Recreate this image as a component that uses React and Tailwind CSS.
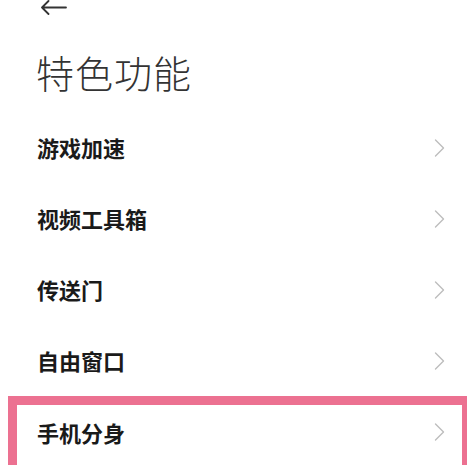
const items = ['游戏加速', '视频工具箱', '传送门', '自由窗口']

function Chevron() {
  return (
    <svg width="11" height="18" viewBox="0 0 11 18" fill="none" aria-hidden="true">
      <polyline points="1.5,1 9.5,9 1.5,17" stroke="#bdbdbd" strokeWidth="1.4" strokeLinecap="round" strokeLinejoin="round" />
    </svg>
  )
}

export default function App() {
  return (
    <div className="w-[467px] h-[465px] overflow-hidden bg-white text-[#1a1a1a] font-['Noto_Sans_CJK_SC','Noto_Sans',sans-serif]">
      <div className="pl-[40px] h-[15px]">
        <svg width="27" height="15" viewBox="0 0 27 15" fill="none" aria-hidden="true">
          <path d="M26 7.5H2M8.5 1L2 7.5L8.5 14" stroke="#333" strokeWidth="1.8" strokeLinecap="round" strokeLinejoin="round" />
        </svg>
      </div>

      <h1 className="mt-[35px] pl-[36px] h-[44px] leading-[44px] text-[38px] font-light text-[#333] tracking-[1px]">
        特色功能
      </h1>

      <div className="mt-[18px]">
        {items.map((t) => (
          <div key={t} className="h-[71px] flex items-center justify-between pl-[37px] pr-[22px]">
            <span className="text-[22px] font-bold">{t}</span>
            <Chevron />
          </div>
        ))}
        <div className="ml-[8px] w-[463px] border-[9px] border-[#ec7191] h-[90px] pb-[18px] flex items-center justify-between pl-[20px] pr-[17px]">
          <span className="text-[22px] font-bold">手机分身</span>
          <Chevron />
        </div>
      </div>
    </div>
  )
}
